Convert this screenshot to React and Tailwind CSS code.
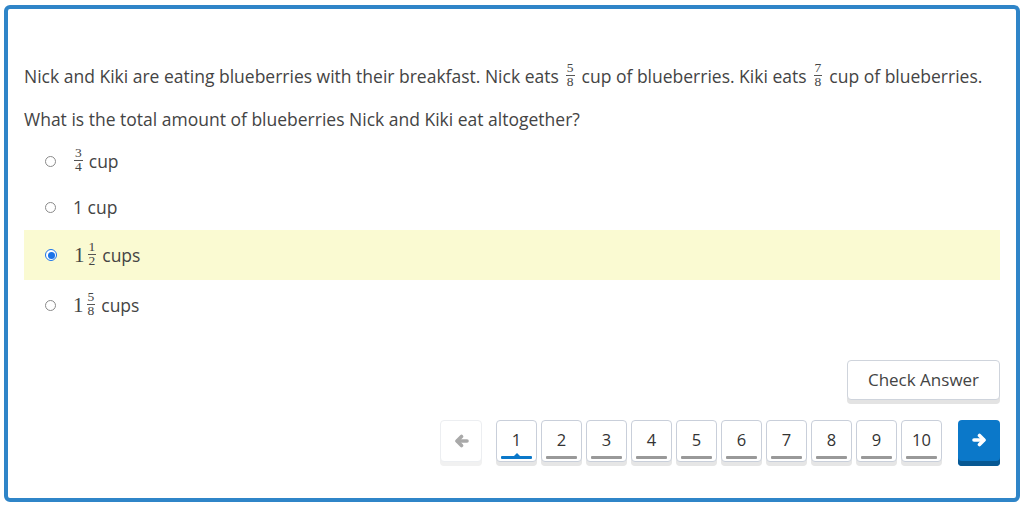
import React from "react";

const Frac = ({ n, d, cls = "mx-[7px]" }) => (
  <span className={`inline-flex flex-col items-center align-middle ${cls} font-['Liberation_Serif',serif] text-[13.5px] leading-[12.5px] text-[#444] relative top-[-1px]`}>
    <span className="px-[1px]">{n}</span>
    <span className="border-t border-[#555] px-[1px] w-full text-center">{d}</span>
  </span>
);

const Radio = ({ checked }) =>
  checked ? (
    <span className="w-[12px] h-[12px] rounded-full border-[1.5px] border-[#1a73e8] bg-white flex items-center justify-center shrink-0">
      <span className="w-[7px] h-[7px] rounded-full bg-[#1a73e8]" />
    </span>
  ) : (
    <span className="w-[11px] h-[11px] rounded-full border border-[#8a8a8a] bg-white shrink-0" />
  );

const Option = ({ checked, h, children }) => (
  <div className={`flex items-center pl-[21px] ${checked ? "bg-[#fafad2]" : ""}`} style={{ height: h }}>
    <Radio checked={checked} />
    <div className="ml-[17px] flex items-center text-[17.5px] text-[#444]">{children}</div>
  </div>
);

const Mixed = ({ w, n, d }) => (
  <span className="inline-flex items-center">
    <span className="font-['Liberation_Serif',serif] text-[21px] text-[#444] leading-none">{w}</span>
    <Frac n={n} d={d} cls="ml-[3px] mr-[6px]" />
  </span>
);

const Arrow = ({ dir }) => (
  <svg width="15" height="14" viewBox="0 0 15 14" style={{ transform: dir === "left" ? "scaleX(-1)" : undefined }}>
    <line x1="2" y1="7" x2="11.5" y2="7" stroke="currentColor" strokeWidth="3.6" strokeLinecap="round" />
    <polyline points="7.5,2.5 12,7 7.5,11.5" fill="none" stroke="currentColor" strokeWidth="3.6" strokeLinecap="round" strokeLinejoin="round" />
  </svg>
);

const PageBtn = ({ label, active }) => (
  <div className="relative w-[41px] h-[42px] rounded-[4px] border border-[#c9cfda] bg-white shadow-[0_4px_0_#e6e6e6] flex items-center justify-center text-[16.5px] text-[#333]">
    <span className="relative top-[-1px]">{label}</span>
    <span className={`absolute left-[4px] right-[4px] bottom-[2px] h-[3px] rounded-[1px] ${active ? "bg-[#0b78c9]" : "bg-[#999]"}`} />
    {active && (
      <span className="absolute left-1/2 -translate-x-1/2 bottom-[4px] w-0 h-0 border-l-[4px] border-r-[4px] border-b-[4px] border-l-transparent border-r-transparent border-b-[#0b78c9]" />
    )}
  </div>
);

export default function App() {
  return (
    <div className="w-[1024px] h-[506px] bg-white font-['Open_Sans',sans-serif] pt-[5px] pl-[4px]">
      <div className="w-[1016px] h-[497px] border-[4px] border-[#2f85c8] rounded-[6px] flex flex-col px-[16px] pt-[54px]">
        <p className="text-[17.5px] leading-[24px] text-[#444] flex items-center whitespace-nowrap">
          Nick and Kiki are eating blueberries with their breakfast. Nick eats
          <Frac n="5" d="8" />
          cup of blueberries. Kiki eats
          <Frac n="7" d="8" />
          cup of blueberries.
        </p>
        <p className="mt-[18px] text-[17.5px] leading-[24px] text-[#444]">
          What is the total amount of blueberries Nick and Kiki eat altogether?
        </p>
        <div className="mt-[7px] flex flex-col">
          <Option h={46}>
            <Frac n="3" d="4" cls="ml-[1px] mr-[6px]" />
            cup
          </Option>
          <Option h={46}>1 cup</Option>
          <Option h={50} checked>
            <Mixed w="1" n="1" d="2" />
            cups
          </Option>
          <Option h={50}>
            <Mixed w="1" n="5" d="8" />
            cups
          </Option>
        </div>
        <div className="mt-[30px] flex justify-end">
          <button className="w-[153px] h-[40px] rounded-[4px] border border-[#cfd4dc] bg-white shadow-[0_4px_0_#e3e3e3] text-[17px] text-[#444]">
            Check Answer
          </button>
        </div>
        <div className="mt-[20px] flex justify-end items-start">
          <div className="w-[42px] h-[42px] rounded-[4px] border border-[#eceef1] bg-white shadow-[0_4px_0_#f1f1f1] flex items-center justify-center text-[#a9a9a9] mr-[14px]">
            <Arrow dir="left" />
          </div>
          <div className="flex gap-[4px]">
            {[1, 2, 3, 4, 5, 6, 7, 8, 9, 10].map((n) => (
              <PageBtn key={n} label={n} active={n === 1} />
            ))}
          </div>
          <div className="ml-[16px] w-[42px] h-[46px] rounded-[4px] bg-[#0b78c9] shadow-[inset_0_-5px_0_#075893] flex items-center justify-center text-white">
            <span className="relative top-[-3px] flex">
              <Arrow dir="right" />
            </span>
          </div>
        </div>
      </div>
    </div>
  );
}
